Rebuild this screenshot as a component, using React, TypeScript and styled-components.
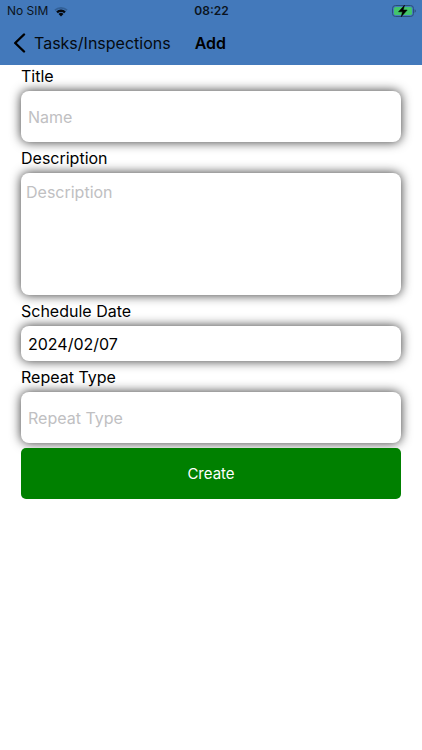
import React, { useState } from "react";
import styled, { createGlobalStyle, css } from "styled-components";

const GlobalStyle = createGlobalStyle`
  *, *::before, *::after { box-sizing: border-box; }
  body {
    margin: 0;
    background: #fff;
    color: #000;
    font-family: Inter, Roboto, "Liberation Sans", sans-serif;
  }
`;

const Header = styled.header`
  background: #4379bb;
`;

const StatusBar = styled.div`
  display: grid;
  grid-template-columns: 1fr auto 1fr;
  align-items: center;
  height: 22px;
  padding: 0 6px 0 7px;
  font-size: 12px;
  line-height: 22px;
  color: #0b1420;
`;

const Carrier = styled.div`
  display: flex;
  align-items: center;
  gap: 6px;
`;

const Clock = styled.time`
  font-weight: 600;
`;

const Battery = styled.svg`
  justify-self: end;
`;

const NavBar = styled.nav`
  display: flex;
  align-items: center;
  gap: 24px;
  height: 43px;
  padding: 0 13px;
  border-bottom: 1px solid #4379bb;
`;

const BackLink = styled.a`
  display: flex;
  align-items: center;
  gap: 8px;
  color: #050a10;
  font-size: 16px;
  line-height: 20px;
  text-decoration: none;
`;

const PageTitle = styled.h1`
  margin: 0;
  font-size: 16px;
  font-weight: 600;
  line-height: 20px;
`;

const Form = styled.form`
  display: flex;
  flex-direction: column;
  padding: 0 21px;
`;

const Field = styled.div`
  display: flex;
  flex-direction: column;
  gap: 4px;
  padding-bottom: 5px;
`;

const Label = styled.label`
  position: relative;
  z-index: 1;
  font-size: 16px;
  line-height: 22px;
`;

const fieldBox = css`
  display: block;
  width: 100%;
  margin: 0;
  border: 0;
  border-radius: 8px;
  outline: 0;
  background: #fff;
  box-shadow: 0 0 11px rgba(0, 0, 0, 0.8);
  color: #000;
  font-family: inherit;
  font-size: 16px;
  line-height: 20px;

  &::placeholder {
    color: #c0c0c2;
    opacity: 1;
  }
`;

const TextInput = styled.input<{ $compact?: boolean }>`
  ${fieldBox}
  height: ${({ $compact }) => ($compact ? 35 : 51)}px;
  padding: 0 7px;
`;

const TextArea = styled.textarea`
  ${fieldBox}
  height: 122px;
  padding: 9px 5px;
  resize: none;
`;

const CreateButton = styled.button`
  position: relative;
  height: 51px;
  border: 0;
  border-radius: 5px;
  background: #008000;
  color: #fff;
  font-family: inherit;
  font-size: 15px;
  line-height: 20px;
`;

function WifiIcon() {
  return (
    <svg width="14" height="11" viewBox="0 0 14 11" aria-label="Wi-Fi">
      <path d="M.4 3.6a9.4 9.4 0 0 1 13.2 0l-1.3 1.4a7.5 7.5 0 0 0-10.6 0z" fill="#326097" />
      <path d="M2.2 5.6a6.8 6.8 0 0 1 9.6 0l-1.6 1.7a4.5 4.5 0 0 0-6.4 0z" fill="#06090e" />
      <path d="M4.5 8a3.5 3.5 0 0 1 5 0L7 10.6z" fill="#06090e" />
    </svg>
  );
}

function BatteryIcon() {
  return (
    <Battery width="24" height="14" viewBox="0 0 24 14" aria-label="Battery charging">
      <rect x=".5" y="1.5" width="21" height="11" rx="3" fill="none" stroke="#2b4e79" />
      <rect x="2" y="3" width="18" height="8" rx="1.5" fill="#43c46b" />
      <path d="M22.6 5.2q1.2.5 1.2 1.8t-1.2 1.8z" fill="#2b4e79" />
      <path d="M12.5 1.2 6.5 7.8h4l-1.3 5 6-6.8h-4z" fill="#000" stroke="#000" strokeWidth=".5" strokeLinejoin="round" />
    </Battery>
  );
}

function BackIcon() {
  return (
    <svg width="13" height="20" viewBox="0 0 13 20" aria-hidden="true">
      <path d="M11 1.5 2.2 10 11 18.5" fill="none" stroke="#000" strokeWidth="2.4" strokeLinecap="round" strokeLinejoin="round" />
    </svg>
  );
}

export default function App() {
  const [date, setDate] = useState("2024/02/07");

  return (
    <>
      <GlobalStyle />
      <Header>
        <StatusBar>
          <Carrier>
            No SIM
            <WifiIcon />
          </Carrier>
          <Clock>08:22</Clock>
          <BatteryIcon />
        </StatusBar>
        <NavBar>
          <BackLink href="#tasks">
            <BackIcon />
            Tasks/Inspections
          </BackLink>
          <PageTitle>Add</PageTitle>
        </NavBar>
      </Header>
      <main>
        <Form onSubmit={(event) => event.preventDefault()}>
          <Field>
            <Label htmlFor="title">Title</Label>
            <TextInput id="title" placeholder="Name" />
          </Field>
          <Field>
            <Label htmlFor="description">Description</Label>
            <TextArea id="description" placeholder="Description" />
          </Field>
          <Field>
            <Label htmlFor="date">Schedule Date</Label>
            <TextInput id="date" $compact value={date} onChange={(event) => setDate(event.target.value)} />
          </Field>
          <Field>
            <Label htmlFor="repeat">Repeat Type</Label>
            <TextInput id="repeat" placeholder="Repeat Type" />
          </Field>
          <CreateButton type="submit">Create</CreateButton>
        </Form>
      </main>
    </>
  );
}
